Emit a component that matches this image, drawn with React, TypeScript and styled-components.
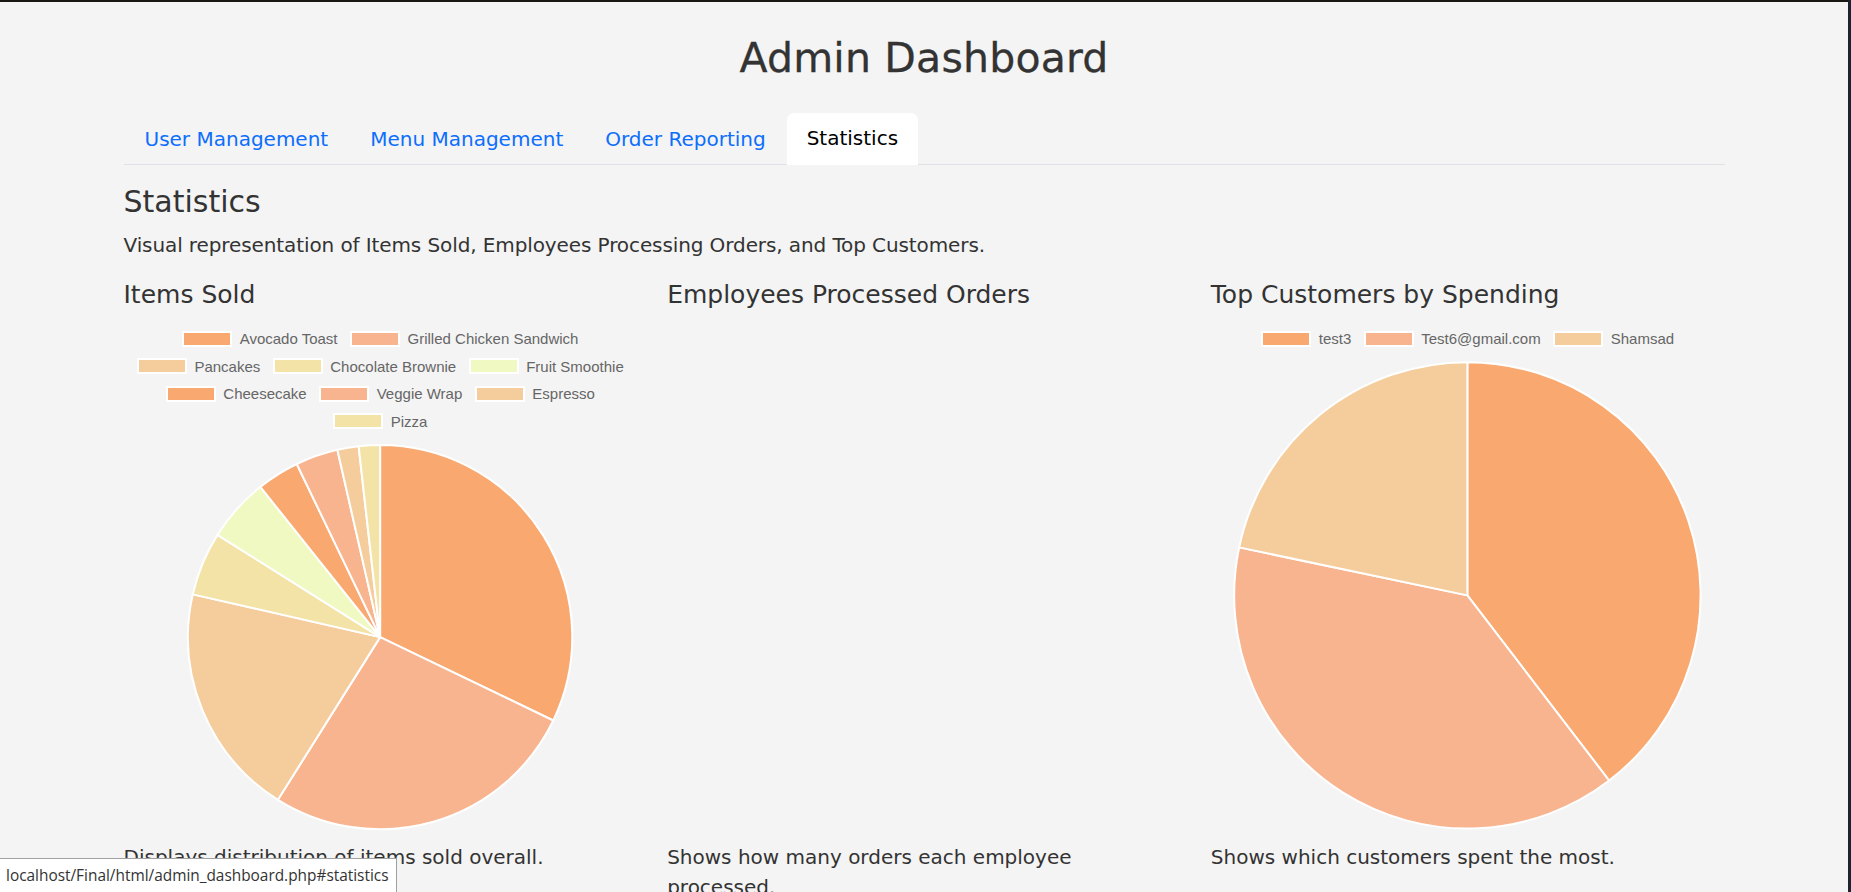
import React from "react";
import styled, { createGlobalStyle } from "styled-components";

const GlobalStyle = createGlobalStyle`
  html {
    background: #1f2230;
    overflow: hidden;
  }
  body {
    margin: 0 3px 0 0;
    border-top: 2px solid #1a1815;
    background: #f4f4f4;
    min-height: calc(100vh - 2px);
    font-family: "DejaVu Sans", "Noto Sans", sans-serif;
    color: #333;
  }
  *, *::before, *::after { box-sizing: border-box; }
`;

const Page = styled.div`
  width: 1601px;
  margin: 0 auto;
  padding-top: 32px;
`;

const Title = styled.h1`
  margin: 0;
  font-size: 41px;
  line-height: 49px;
  font-weight: 400;
  letter-spacing: 0.2px;
  -webkit-text-stroke: 0.3px #333;
  text-align: center;
  color: #333;
`;

const TabBar = styled.nav`
  display: flex;
  margin-top: 29.5px;
  border-bottom: 1px solid #dee2e6;
`;

const Tab = styled.a<{ $active?: boolean }>`
  display: block;
  padding: 10px 20px;
  margin-bottom: -1px;
  border: 1px solid ${(p) => (p.$active ? "#dee2e6 #dee2e6 #fff" : "transparent")};
  border-radius: 7px 7px 0 0;
  background: ${(p) => (p.$active ? "#fff" : "transparent")};
  color: ${(p) => (p.$active ? "#000" : "#0d6efd")};
  font-size: 20px;
  line-height: 30px;
  text-decoration: none;
  cursor: pointer;
`;

const Section = styled.section`
  padding-top: 19.5px;
`;

const SectionTitle = styled.h4`
  margin: 0 0 10px;
  font-size: 30px;
  line-height: 36px;
  font-weight: 400;
  color: #333;
`;

const Intro = styled.p`
  margin: 0 0 20px;
  font-size: 20px;
  line-height: 30px;
  letter-spacing: -0.1px;
  color: #333;
`;

const Grid = styled.div`
  display: grid;
  grid-template-columns: repeat(3, minmax(0, 1fr));
  column-gap: 30px;
`;

const Column = styled.div`
  display: flex;
  flex-direction: column;
`;

const ColumnTitle = styled.h5`
  margin: 0 0 10px;
  font-size: 25px;
  line-height: 30px;
  font-weight: 400;
  color: #333;
`;

const ChartBox = styled.div`
  height: 510px;
  display: grid;
  grid-template-rows: auto minmax(0, 1fr);
`;

const Legend = styled.div`
  padding: 5px 0 8.75px;
`;

const LegendRow = styled.div`
  height: 27.5px;
  display: flex;
  justify-content: center;
  align-items: center;
  gap: 12.5px;
`;

const LegendItem = styled.div`
  display: flex;
  align-items: center;
  gap: 7.5px;
`;

const Swatch = styled.span<{ $color: string }>`
  display: block;
  width: 50px;
  height: 16px;
  border: 2px solid #fff;
  background: ${(p) => p.$color};
`;

const LegendLabel = styled.span`
  font-family: "Liberation Sans", Arial, sans-serif;
  font-size: 15px;
  line-height: 1;
  color: #666;
  white-space: nowrap;
`;

const PieArea = styled.div`
  min-height: 0;
  display: flex;
  justify-content: center;
`;

const PieSvg = styled.svg`
  height: 100%;
  width: auto;
  aspect-ratio: 1 / 1;
  overflow: visible;
`;

const Description = styled.p`
  margin: 12px 0 0;
  font-size: 20px;
  line-height: 30px;
  color: #333;
`;

const StatusBar = styled.div`
  position: fixed;
  left: 0;
  bottom: 0;
  height: 34px;
  padding: 0 7px 0 6px;
  display: flex;
  align-items: center;
  background: #fff;
  border-top: 1px solid #a0a0a0;
  border-right: 1px solid #a0a0a0;
  font-family: "Open Sans", "Liberation Sans", sans-serif;
  font-size: 15.4px;
  color: #333;
  white-space: nowrap;
`;

const PALETTE = ["#f9a870", "#f8b48f", "#f5cd9c", "#f3e3a6", "#f0f9c1"];

type Slice = { label: string; value: number };

const itemsSold: Slice[] = [
  { label: "Avocado Toast", value: 18 },
  { label: "Grilled Chicken Sandwich", value: 15 },
  { label: "Pancakes", value: 11 },
  { label: "Chocolate Brownie", value: 3 },
  { label: "Fruit Smoothie", value: 3 },
  { label: "Cheesecake", value: 2 },
  { label: "Veggie Wrap", value: 2 },
  { label: "Espresso", value: 1 },
  { label: "Pizza", value: 1 },
];

const topCustomers: Slice[] = [
  { label: "test3", value: 39.6 },
  { label: "Test6@gmail.com", value: 38.7 },
  { label: "Shamsad", value: 21.7 },
];

const R = 99.5;

function point(angle: number) {
  const rad = (angle * Math.PI) / 180;
  return [R * Math.sin(rad), -R * Math.cos(rad)];
}

const Pie: React.FC<{ data: Slice[] }> = ({ data }) => {
  const total = data.reduce((s, d) => s + d.value, 0);
  let start = 0;
  return (
    <PieSvg viewBox="-100 -100 200 200">
      {data.map((d, i) => {
        const sweep = (d.value / total) * 360;
        const end = start + sweep;
        const [x1, y1] = point(start);
        const [x2, y2] = point(end);
        const large = sweep > 180 ? 1 : 0;
        const path = `M0 0 L${x1.toFixed(3)} ${y1.toFixed(3)} A${R} ${R} 0 ${large} 1 ${x2.toFixed(3)} ${y2.toFixed(3)} Z`;
        start = end;
        return (
          <path
            key={d.label}
            d={path}
            fill={PALETTE[i % PALETTE.length]}
            stroke="#fff"
            strokeWidth={2}
            strokeLinejoin="round"
            vectorEffect="non-scaling-stroke"
          />
        );
      })}
    </PieSvg>
  );
};

const ChartLegend: React.FC<{ data: Slice[]; rows: number[][] }> = ({ data, rows }) => (
  <Legend>
    {rows.map((row, r) => (
      <LegendRow key={r}>
        {row.map((i) => (
          <LegendItem key={data[i].label}>
            <Swatch $color={PALETTE[i % PALETTE.length]} />
            <LegendLabel>{data[i].label}</LegendLabel>
          </LegendItem>
        ))}
      </LegendRow>
    ))}
  </Legend>
);

export default function App() {
  const tabs = ["User Management", "Menu Management", "Order Reporting", "Statistics"];
  return (
    <>
      <GlobalStyle />
      <Page>
        <Title>Admin Dashboard</Title>
        <TabBar>
          {tabs.map((t) => (
            <Tab key={t} $active={t === "Statistics"}>
              {t}
            </Tab>
          ))}
        </TabBar>
        <Section>
          <SectionTitle>Statistics</SectionTitle>
          <Intro>
            Visual representation of Items Sold, Employees Processing Orders, and Top Customers.
          </Intro>
          <Grid>
            <Column>
              <ColumnTitle>Items Sold</ColumnTitle>
              <ChartBox>
                <ChartLegend data={itemsSold} rows={[[0, 1], [2, 3, 4], [5, 6, 7], [8]]} />
                <PieArea>
                  <Pie data={itemsSold} />
                </PieArea>
              </ChartBox>
              <Description>Displays distribution of items sold overall.</Description>
            </Column>
            <Column>
              <ColumnTitle>Employees Processed Orders</ColumnTitle>
              <ChartBox />
              <Description>Shows how many orders each employee processed.</Description>
            </Column>
            <Column>
              <ColumnTitle>Top Customers by Spending</ColumnTitle>
              <ChartBox>
                <ChartLegend data={topCustomers} rows={[[0, 1, 2]]} />
                <PieArea>
                  <Pie data={topCustomers} />
                </PieArea>
              </ChartBox>
              <Description>Shows which customers spent the most.</Description>
            </Column>
          </Grid>
        </Section>
      </Page>
      <StatusBar>localhost/Final/html/admin_dashboard.php#statistics</StatusBar>
    </>
  );
}
